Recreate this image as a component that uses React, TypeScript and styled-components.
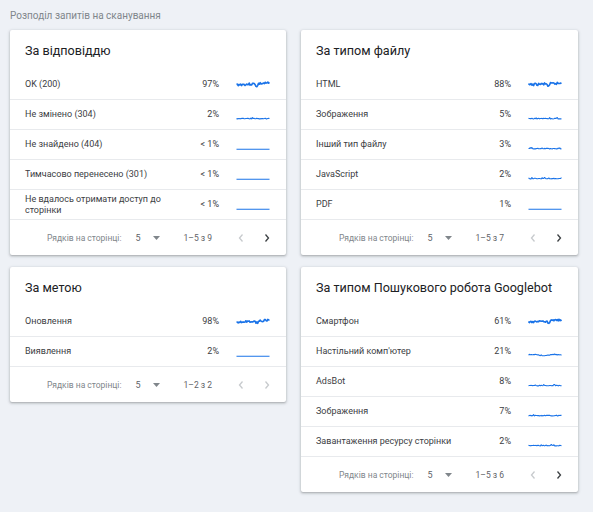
import React from "react";
import styled, { createGlobalStyle } from "styled-components";

const Global = createGlobalStyle`
  html, body { margin: 0; padding: 0; background: #eef1f6; }
  body { font-family: Roboto, "Noto Sans", "Liberation Sans", sans-serif; -webkit-font-smoothing: antialiased; }
`;

const Page = styled.div`
  width: 593px;
  min-height: 512px;
  box-sizing: border-box;
  padding: 9px 15px 0 10px;
  background: #eef1f6;
`;

const PageTitle = styled.div`
  font-size: 10px;
  line-height: 14px;
  color: #80868b;
  margin-bottom: 7px;
`;

const Grid = styled.div`
  display: grid;
  grid-template-columns: 276px 277px;
  column-gap: 15px;
  row-gap: 12px;
  align-items: start;
`;

const Card = styled.section`
  background: #fff;
  border-radius: 2px;
  box-shadow: 0 1px 2px rgba(60, 64, 67, 0.3), 0 1px 3px 1px rgba(60, 64, 67, 0.12);
`;

const CardTitle = styled.h2`
  margin: 0;
  height: 40px;
  box-sizing: border-box;
  padding: 12px 15px 0;
  font-size: 12.6px;
  line-height: 18px;
  font-weight: 400;
  color: #202124;
  white-space: nowrap;
`;

const Row = styled.div`
  display: flex;
  align-items: center;
  height: 30px;
  box-sizing: border-box;
  padding: 0 16px 0 15px;
  border-bottom: 1px solid #e8eaed;
`;

const Label = styled.div`
  width: 140px;
  flex: 0 0 140px;
  font-size: 9px;
  line-height: 11px;
  color: #3c4043;
`;

const Pct = styled.div`
  flex: 1;
  text-align: right;
  font-size: 9px;
  line-height: 11px;
  color: #3c4043;
`;

const Spark = styled.svg`
  flex: 0 0 34px;
  margin-left: 17px;
  display: block;
`;

const Footer = styled.div`
  display: flex;
  align-items: center;
  justify-content: flex-end;
  height: 35px;
  padding-right: 6px;
  font-size: 8.5px;
  color: #80868b;
`;

const RowsLabel = styled.span`
  margin-right: 14px;
`;

const PerPage = styled.span`
  color: #5f6368;
  font-size: 9px;
  margin-right: 12px;
`;

const Caret = styled.svg`
  display: block;
  margin-right: 24px;
`;

const Range = styled.span`
  color: #5f6368;
  font-size: 8.5px;
  margin-right: 16px;
`;

const NavButton = styled.span`
  width: 26px;
  display: flex;
  justify-content: center;
  align-items: center;
`;

function rng(seed: number) {
  let s = seed;
  return () => {
    s = (s * 9301 + 49297) % 233280;
    return s / 233280;
  };
}

type SparkKind = "high" | "mid" | "low" | "flat";

function makeSeries(seed: number, kind: SparkKind, n = 40) {
  const r = rng(seed);
  const pts: number[] = [];
  for (let i = 0; i < n; i++) {
    let v: number;
    if (kind === "high") {
      const t = i / (n - 1);
      v = 5.8 - t * 1.6 + (r() - 0.5) * 2.4;
      if (Math.abs(t - 0.62) < 0.04) v += 2.2;
    } else if (kind === "mid") {
      v = 9 - Math.sin(i / 4) * 0.6 + (r() - 0.5) * 1;
    } else if (kind === "low") {
      v = 9.6 + (r() - 0.5) * 0.7;
      if (r() > 0.9) v -= 0.8;
    } else {
      v = 10.2;
    }
    pts.push(v);
  }
  return pts;
}

const Sparkline: React.FC<{ kind: SparkKind; seed: number }> = ({ kind, seed }) => {
  const data = makeSeries(seed, kind);
  const pts = data
    .map((y, i) => `${((i / (data.length - 1)) * 33 + 0.5).toFixed(2)},${y.toFixed(2)}`)
    .join(" ");
  return (
    <Spark width={34} height={12} viewBox="0 0 34 12">
      <polyline
        points={pts}
        fill="none"
        stroke="#1a73e8"
        strokeWidth={kind === "high" ? 1.6 : 1.1}
        strokeLinejoin="round"
      />
    </Spark>
  );
};

const Chevron: React.FC<{ dir: "left" | "right"; active: boolean }> = ({ dir, active }) => (
  <svg width="8" height="10" viewBox="0 0 8 10">
    <path
      d={dir === "left" ? "M5.5 1.5 L2.5 5 L5.5 8.5" : "M2.5 1.5 L5.5 5 L2.5 8.5"}
      fill="none"
      stroke={active ? "#3c4043" : "#c7cacd"}
      strokeWidth={1.3}
    />
  </svg>
);

type Item = { label: string; pct: string; kind: SparkKind };

type CardData = {
  title: string;
  items: Item[];
  range: string;
  hasNext: boolean;
};

const cards: CardData[] = [
  {
    title: "За відповіддю",
    items: [
      { label: "OK (200)", pct: "97%", kind: "high" },
      { label: "Не змінено (304)", pct: "2%", kind: "low" },
      { label: "Не знайдено (404)", pct: "< 1%", kind: "flat" },
      { label: "Тимчасово перенесено (301)", pct: "< 1%", kind: "flat" },
      { label: "Не вдалось отримати доступ до сторінки", pct: "< 1%", kind: "flat" },
    ],
    range: "1–5 з 9",
    hasNext: true,
  },
  {
    title: "За типом файлу",
    items: [
      { label: "HTML", pct: "88%", kind: "high" },
      { label: "Зображення", pct: "5%", kind: "low" },
      { label: "Інший тип файлу", pct: "3%", kind: "low" },
      { label: "JavaScript", pct: "2%", kind: "low" },
      { label: "PDF", pct: "1%", kind: "flat" },
    ],
    range: "1–5 з 7",
    hasNext: true,
  },
  {
    title: "За метою",
    items: [
      { label: "Оновлення", pct: "98%", kind: "high" },
      { label: "Виявлення", pct: "2%", kind: "flat" },
    ],
    range: "1–2 з 2",
    hasNext: false,
  },
  {
    title: "За типом Пошукового робота Googlebot",
    items: [
      { label: "Смартфон", pct: "61%", kind: "high" },
      { label: "Настільний комп'ютер", pct: "21%", kind: "mid" },
      { label: "AdsBot", pct: "8%", kind: "low" },
      { label: "Зображення", pct: "7%", kind: "low" },
      { label: "Завантаження ресурсу сторінки", pct: "2%", kind: "low" },
    ],
    range: "1–5 з 6",
    hasNext: true,
  },
];

export default function App() {
  return (
    <Page>
      <Global />
      <PageTitle>Розподіл запитів на сканування</PageTitle>
      <Grid>
        {cards.map((c, ci) => (
          <Card key={ci}>
            <CardTitle>{c.title}</CardTitle>
            {c.items.map((it, i) => (
              <Row key={i}>
                <Label>{it.label}</Label>
                <Pct>{it.pct}</Pct>
                <Sparkline kind={it.kind} seed={ci * 17 + i * 5 + 3} />
              </Row>
            ))}
            <Footer>
              <RowsLabel>Рядків на сторінці:</RowsLabel>
              <PerPage>5</PerPage>
              <Caret width="7" height="4" viewBox="0 0 7 4">
                <path d="M0 0 L7 0 L3.5 4 Z" fill="#80868b" />
              </Caret>
              <Range>{c.range}</Range>
              <NavButton>
                <Chevron dir="left" active={false} />
              </NavButton>
              <NavButton>
                <Chevron dir="right" active={c.hasNext} />
              </NavButton>
            </Footer>
          </Card>
        ))}
      </Grid>
    </Page>
  );
}
